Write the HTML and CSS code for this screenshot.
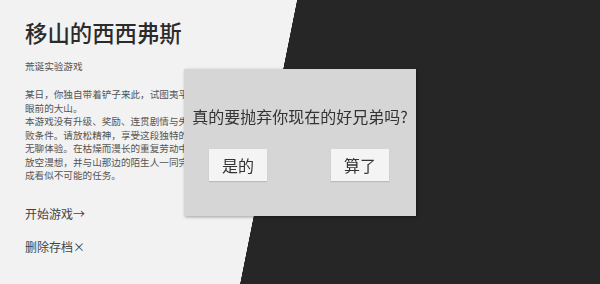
FILE: index.html
```html
<!DOCTYPE html>
<html lang="zh-CN">
<head>
    <meta charset="UTF-8">
    <meta name="viewport" content="width=device-width, initial-scale=1.0">
    <title>移山的西西弗斯</title>
    <link rel="stylesheet" href="styles.css">
</head>
<body>

    <div class="intro">
        <h1 class="title">移山的西西弗斯</h1>
        <div class="subtitle">荒诞实验游戏</div>
        <p class="story">某日，你独自带着铲子来此，试图夷平眼前的大山。<br>本游戏没有升级、奖励、连贯剧情与失败条件。请放松精神，享受这段独特的无聊体验。在枯燥而漫长的重复劳动中放空漫想，并与山那边的陌生人一同完成看似不可能的任务。</p>
        <div class="menu">
            <a class="menu-item" href="#">开始游戏→</a>
            <a class="menu-item" href="#" onclick="showConfirm(); return false;">删除存档×</a>
        </div>
    </div>

    <div id="confirm" class="overlay">
        <div class="dialog">
            <div class="question">真的要抛弃你现在的好兄弟吗?</div>
            <div class="actions">
                <button class="btn" onclick="hideConfirm()">是的</button>
                <button class="btn" onclick="hideConfirm()">算了</button>
            </div>
        </div>
    </div>

    <script>
        function showConfirm() {
            document.getElementById('confirm').style.display = 'flex';
        }

        function hideConfirm() {
            document.getElementById('confirm').style.display = 'none';
        }
    </script>

</body>
</html>
```

FILE: styles.css
```css
body {
    margin: 0;
    height: 100vh;
    font-family: "Noto Sans CJK SC", "Noto Sans", sans-serif;
    color: #333;
    background: linear-gradient(101.35deg, #f2f2f2 291px, #262626 291.5px);
    overflow: hidden;
}
.intro {
    padding: 17px 0 0 25px;
}
.title {
    margin: 0;
    font-size: 22.4px;
    line-height: 31px;
    font-weight: 500;
    color: #2b2b2b;
}
.subtitle {
    margin-top: 12px;
    font-size: 9.6px;
    line-height: 13.4px;
    color: #555;
}
.story {
    width: 17em;
    margin: 15px 0 0 0;
    font-size: 9.6px;
    line-height: 13.44px;
    color: #555;
}
.menu {
    display: flex;
    flex-direction: column;
    align-items: flex-start;
    gap: 16.4px;
    margin-top: 22.4px;
}
.menu-item {
    font-size: 12px;
    line-height: 17px;
    color: #444;
    text-decoration: none;
}
.overlay {
    position: fixed;
    top: 0;
    left: 0;
    right: 0;
    bottom: 0;
    display: flex;
    justify-content: center;
    align-items: center;
}
.dialog {
    width: 232px;
    height: 147px;
    box-sizing: border-box;
    background-color: #d6d6d6;
    box-shadow: 1px 1px 3px rgba(0, 0, 0, 0.35);
    padding-top: 37px;
}
.question {
    font-size: 16px;
    line-height: 20px;
    text-align: center;
    color: #333;
}
.actions {
    display: flex;
    justify-content: space-between;
    padding: 0 27px 0 25px;
    margin-top: 23px;
}
.btn {
    width: 58px;
    height: 32px;
    padding: 0;
    font-family: inherit;
    font-size: 16px;
    color: #333;
    background-color: #f4f4f4;
    border: none;
    box-shadow: 0 1px 1px rgba(0, 0, 0, 0.12);
    cursor: pointer;
}
```
